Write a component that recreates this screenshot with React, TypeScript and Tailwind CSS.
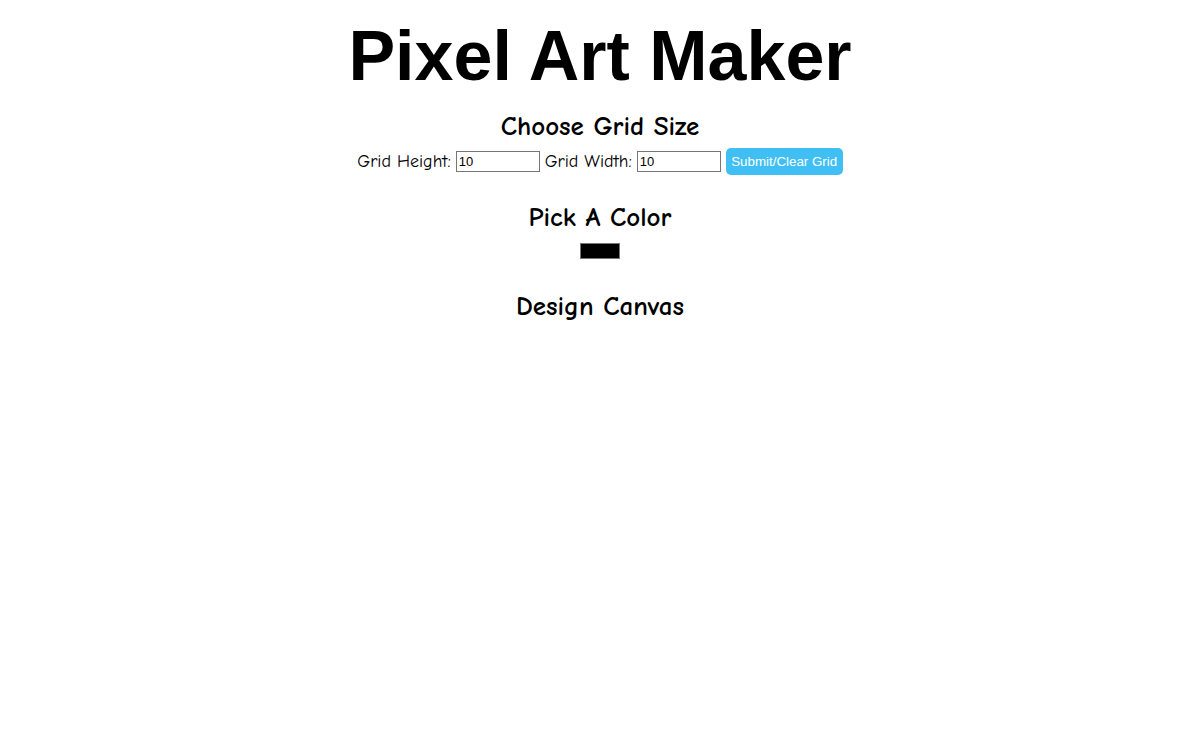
import { useState } from "react";

export default function App() {
  const [height, setHeight] = useState("10");
  const [width, setWidth] = useState("10");

  return (
    <main className="min-h-screen bg-white text-black text-center font-['Comic_Sans_MS','Comic_Neue','Lato',sans-serif]">
      <h1 className="pt-[16px] text-[70px] leading-[80px] font-bold font-['Liberation_Sans',Arial,sans-serif]">
        Pixel Art Maker
      </h1>

      <h2 className="mt-[15px] text-[27px] leading-[32px] font-bold">Choose Grid Size</h2>
      <form
        className="mt-[5px] flex items-center justify-center gap-[5px] text-[18px]"
        onSubmit={(e) => e.preventDefault()}
      >
        <label htmlFor="inputHeight">Grid Height:</label>
        <input
          id="inputHeight"
          type="text"
          value={height}
          onChange={(e) => setHeight(e.target.value)}
          className="w-[84px] h-[21px] border border-[#767676] px-[2px] text-[13px] font-['Liberation_Sans',Arial,sans-serif] outline-none"
        />
        <label htmlFor="inputWidth">Grid Width:</label>
        <input
          id="inputWidth"
          type="text"
          value={width}
          onChange={(e) => setWidth(e.target.value)}
          className="w-[84px] h-[21px] border border-[#767676] px-[2px] text-[13px] font-['Liberation_Sans',Arial,sans-serif] outline-none"
        />
        <button
          type="submit"
          className="w-[117px] h-[27px] rounded-[5px] bg-[#40bff5] text-white text-[13.33px] font-['Liberation_Sans',Arial,sans-serif]"
        >
          Submit/Clear Grid
        </button>
      </form>

      <h2 className="mt-[27px] text-[27px] leading-[32px] font-bold">Pick A Color</h2>
      <div className="mt-[9px] flex justify-center">
        <div className="w-[40px] h-[16px] border border-[#777] bg-black" />
      </div>

      <h2 className="mt-[32px] text-[27px] leading-[32px] font-bold">Design Canvas</h2>
      <table className="mx-auto mt-[10px]">
        <tbody />
      </table>
    </main>
  );
}
